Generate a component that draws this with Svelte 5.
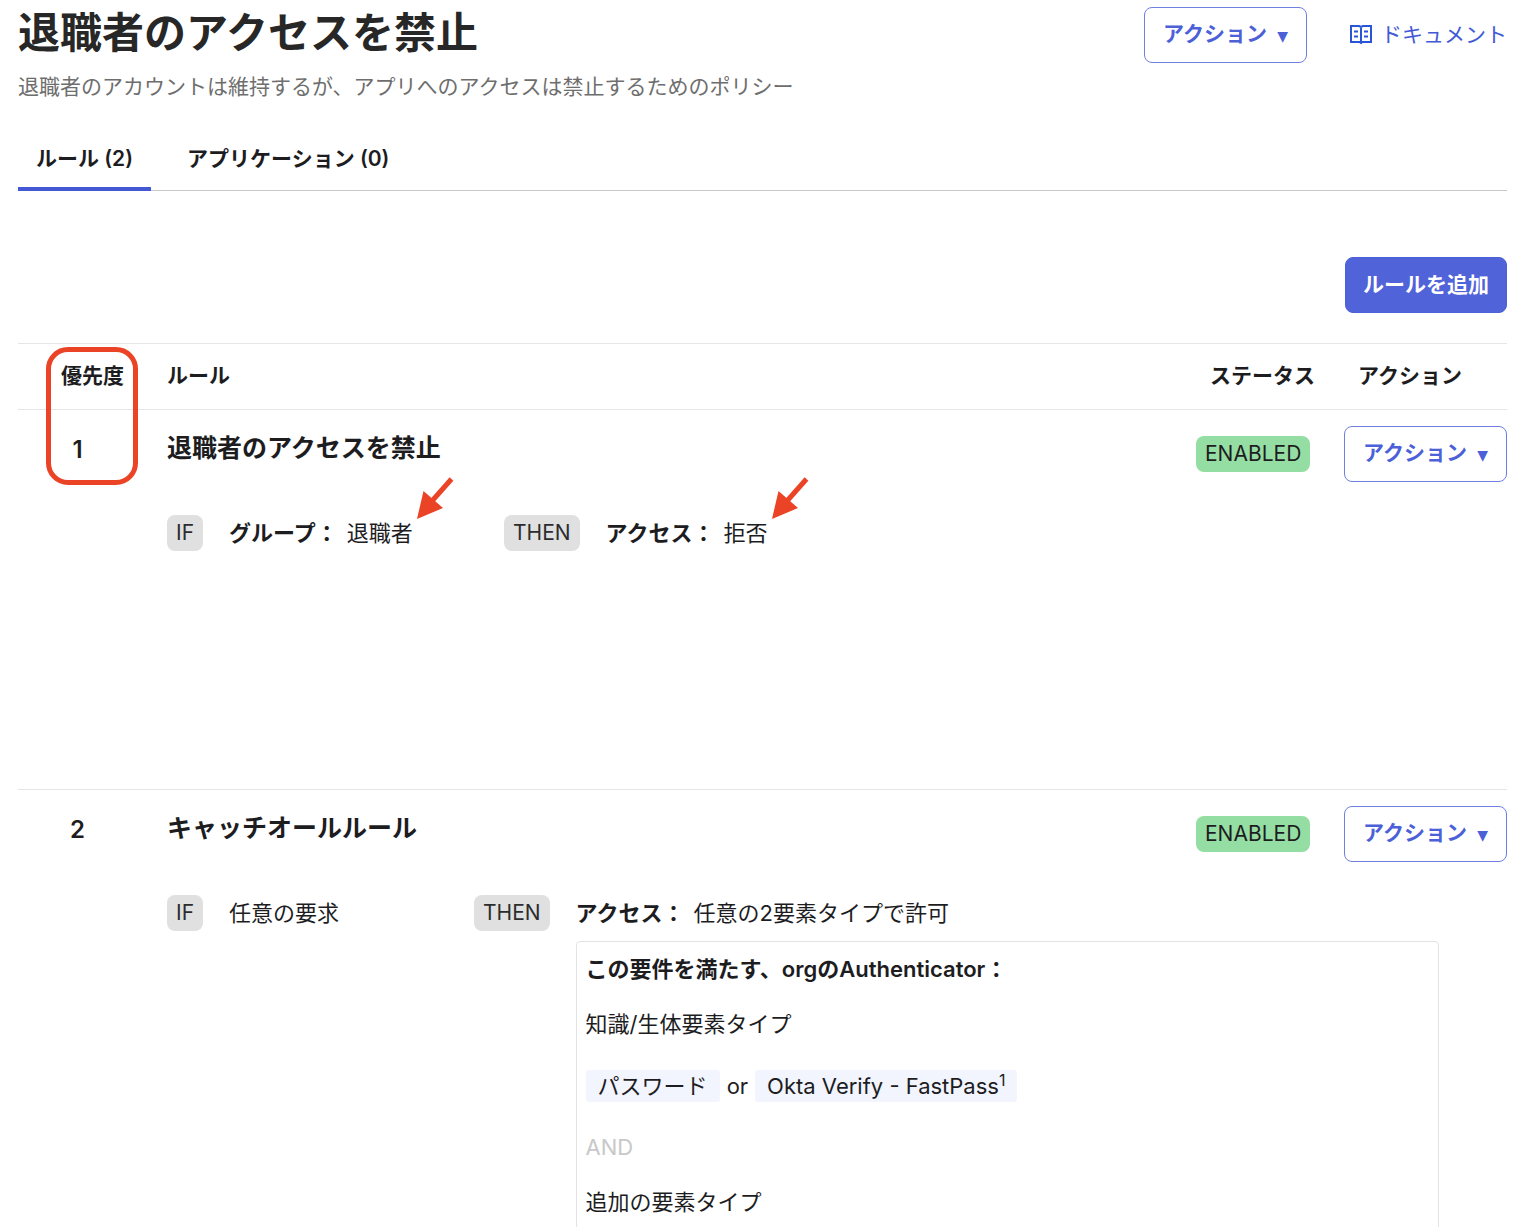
<script lang="ts">
  interface Rule {
    priority: number;
    name: string;
    status: string;
    ifLabel?: string;
    ifValue: string;
    ifWidth: number;
    access: string;
    // denied access gets the short panel with pointers
    denied: boolean;
  }

  const tabs = [
    { id: 'rules', label: 'ルール', count: 2 },
    { id: 'apps', label: 'アプリケーション', count: 0 },
  ];

  const rules: Rule[] = [
    {
      priority: 1,
      name: '退職者のアクセスを禁止',
      status: 'ENABLED',
      ifLabel: 'グループ：',
      ifValue: '退職者',
      ifWidth: 337,
      access: '拒否',
      denied: true,
    },
    {
      priority: 2,
      name: 'キャッチオールルール',
      status: 'ENABLED',
      ifValue: '任意の要求',
      ifWidth: 307,
      access: '任意の2要素タイプで許可',
      denied: false,
    },
  ];

  let active = $state('rules');
</script>

{#snippet pointer()}
  <svg class="pointer" width="38" height="42" viewBox="0 0 38 42" aria-hidden="true">
    <path d="M34.500 2 15 24" stroke="#eb4326" stroke-width="5" fill="none" />
    <path d="M0 42 6.500 14 26 31Z" fill="#eb4326" />
  </svg>
{/snippet}

{#snippet actionButton()}
  <button type="button" class="btn">アクション <span class="btn__caret">▼</span></button>
{/snippet}

<main class="page">
  <header class="head">
    <div>
      <h1 class="head__title">退職者のアクセスを禁止</h1>
      <p class="head__desc">退職者のアカウントは維持するが、アプリへのアクセスは禁止するためのポリシー</p>
    </div>
    <div class="head__actions">
      {@render actionButton()}
      <a class="doc-link" href="#docs">
        <svg width="22" height="20" viewBox="0 0 22 20" fill="none" stroke="currentColor" stroke-width="2" aria-hidden="true">
          <path d="M1 1h8l2 1 2-1h8v16h-8.500L11 18 9.500 17H1ZM11 2v17M4 6.500h4M4 11.500h4M14 6.500h4M14 11.500h4" />
        </svg>
        ドキュメント
      </a>
    </div>
  </header>

  <div class="tabs" role="tablist">
    {#each tabs as tab (tab.id)}
      <button
        type="button"
        role="tab"
        class="tabs__item"
        class:tabs__item--active={active === tab.id}
        aria-selected={active === tab.id}
        onclick={() => (active = tab.id)}>{tab.label} ({tab.count})</button>
    {/each}
  </div>

  <div class="toolbar">
    <button type="button" class="btn btn--primary">ルールを追加</button>
  </div>

  <div class="rules-wrap">
    <table class="rules">
      <colgroup>
        <col class="col-priority" />
        <col />
        <col class="col-status" />
        <col class="col-action" />
      </colgroup>
      <thead>
        <tr>
          <th class="rules__priority-head" scope="col">優先度</th>
          <th scope="col">ルール</th>
          <th class="rules__inset" scope="col">ステータス</th>
          <th class="rules__inset" scope="col">アクション</th>
        </tr>
      </thead>
      {#each rules as rule (rule.priority)}
        <tbody>
          <tr class="rule">
            <td class="rule__priority">{rule.priority}</td>
            <td class="rule__name">{rule.name}</td>
            <td><span class="badge badge--enabled">{rule.status}</span></td>
            <td>{@render actionButton()}</td>
          </tr>
          <tr>
            <td></td>
            <td colspan="3" class="rule__details" class:rule__details--denied={rule.denied}>
              <div class="clauses">
                <div class="clause" style:width="{rule.ifWidth}px">
                  <span class="badge">IF</span>
                  <div class="clause__text">
                    {#if rule.ifLabel}<strong>{rule.ifLabel}</strong>{/if}
                    <span class="clause__value">{rule.ifValue}{#if rule.denied}{@render pointer()}{/if}</span>
                  </div>
                </div>
                <div class="clause clause--then">
                  <span class="badge">THEN</span>
                  <div class="clause__body">
                    <div class="clause__text">
                      <strong>アクセス：</strong>
                      <span class="clause__value">{rule.access}{#if rule.denied}{@render pointer()}{/if}</span>
                    </div>
                    {#if !rule.denied}
                      <div class="factors">
                        <strong>この要件を満たす、orgのAuthenticator：</strong>
                        <p>知識/生体要素タイプ</p>
                        <div class="factors__row">
                          <span class="chip">パスワード</span>
                          <span>or</span>
                          <span class="chip">Okta Verify - FastPass<sup>1</sup></span>
                        </div>
                        <div class="factors__and">AND</div>
                        <p>追加の要素タイプ</p>
                      </div>
                    {/if}
                  </div>
                </div>
              </div>
            </td>
          </tr>
        </tbody>
      {/each}
    </table>
    <div class="highlight"></div>
  </div>
</main>

<style>
  :global(body) {
    margin: 0;
    background: #fff;
  }
  .page {
    box-sizing: border-box;
    height: 100vh;
    overflow: hidden;
    padding: 7px 29px 0 18px;
    font-family: Inter, 'Noto Sans CJK JP', sans-serif;
    font-size: 22px;
    line-height: 32px;
    color: #1d1d1f;
  }
  .head {
    display: flex;
    justify-content: space-between;
    align-items: flex-start;
  }
  .head__title {
    margin: 0;
    font-size: 42px;
    line-height: 52px;
    font-weight: 600;
    color: #272727;
  }
  .head__desc {
    margin: 12px 0 0;
    font-size: 21px;
    color: #6e6e6e;
  }
  .head__actions {
    display: flex;
    align-items: center;
    gap: 43px;
  }
  .doc-link {
    display: flex;
    align-items: center;
    gap: 9px;
    font-size: 21px;
    color: #4259d6;
    text-decoration: none;
  }
  .doc-link svg {
    color: #2a55d6;
  }
  .btn {
    box-sizing: border-box;
    height: 56px;
    padding: 0 18px;
    border: 1px solid #6f7fe0;
    border-radius: 8px;
    background: #fff;
    color: #4c60d8;
    font: inherit;
    font-size: 21px;
    font-weight: 600;
    white-space: nowrap;
    cursor: pointer;
  }
  .btn__caret {
    margin-left: 5px;
    font-family: 'DejaVu Sans', sans-serif;
    font-size: 14px;
    font-weight: 400;
  }
  .btn--primary {
    padding: 0 17px;
    border-color: #4c60d8;
    background: #5063d9;
    color: #fff;
  }
  .tabs {
    display: flex;
    gap: 18px;
    margin-top: 32px;
    border-bottom: 1px solid #c8c8cc;
  }
  .tabs__item {
    box-sizing: border-box;
    height: 56px;
    margin-bottom: -1px;
    padding: 0 18px 4px;
    border: 0;
    border-bottom: 4px solid transparent;
    background: none;
    color: inherit;
    font: inherit;
    font-size: 21px;
    font-weight: 600;
    cursor: pointer;
  }
  .tabs__item--active {
    border-bottom-color: #4458d4;
  }
  .toolbar {
    display: flex;
    justify-content: flex-end;
    padding: 66px 0 30px;
  }
  .rules-wrap {
    position: relative;
  }
  .rules {
    width: 100%;
    table-layout: fixed;
    border-collapse: collapse;
  }
  .col-priority {
    width: 149px;
  }
  .col-status {
    width: 148px;
  }
  .col-action {
    width: 163px;
  }
  .rules th,
  .rules td {
    box-sizing: border-box;
    padding: 0;
    text-align: left;
    vertical-align: top;
  }
  .rules th {
    padding: 16px 0 17px;
    font-size: 21px;
    font-weight: 600;
  }
  .rules .rules__priority-head {
    padding-left: 43px;
  }
  .rules .rules__inset {
    padding-left: 14px;
  }
  .rules thead,
  .rules tbody {
    border-top: 1px solid #e6e6e8;
  }
  .rules .rule td {
    height: 72px;
    vertical-align: bottom;
  }
  .rules .rule .rule__priority {
    padding: 0 30px 16px 0;
    font-size: 24px;
    font-weight: 600;
    text-align: center;
  }
  .rules .rule .rule__name {
    padding-bottom: 18px;
    font-size: 25px;
    font-weight: 600;
  }
  .rules .rule td .badge {
    margin-bottom: 10px;
  }
  .rules .rule__details {
    padding: 33px 68px 30px 0;
  }
  .rules .rule__details--denied {
    height: 308px;
  }
  .rules .btn {
    display: block;
    width: 100%;
  }
  .badge {
    display: inline-block;
    padding: 2px 9px;
    border-radius: 8px;
    background: #e0e0e0;
    color: #2c2c2e;
    font-size: 21px;
  }
  .badge--enabled {
    background: #95dea3;
    color: #1d1d1f;
  }
  .clauses,
  .clause {
    display: flex;
    align-items: flex-start;
  }
  .clause {
    flex: none;
    gap: 26px;
  }
  .clause--then {
    flex: 1;
  }
  .clause__body {
    flex: 1;
  }
  .clause__text {
    display: flex;
    gap: 9px;
    padding: 2px 0;
  }
  .clause__value {
    position: relative;
  }
  .pointer {
    position: absolute;
    right: -42px;
    bottom: 30px;
  }
  strong {
    font-weight: 600;
  }
  .factors {
    margin-top: 10px;
    padding: 11px 9px;
    border: 1px solid #e3e3e6;
    border-radius: 4px;
  }
  .factors p {
    margin: 23px 0 30px;
  }
  .factors__row {
    display: flex;
    gap: 7px;
  }
  .factors__and {
    margin-top: 29px;
    color: #c8c8c8;
  }
  .chip {
    padding: 0 12px;
    border-radius: 3px;
    background: #f2f4fe;
  }
  .chip sup {
    font-size: 16px;
    line-height: 0;
  }
  .highlight {
    position: absolute;
    top: 4px;
    left: 28px;
    box-sizing: border-box;
    width: 92px;
    height: 138px;
    border: 5px solid #eb4326;
    border-radius: 22px;
  }
</style>
